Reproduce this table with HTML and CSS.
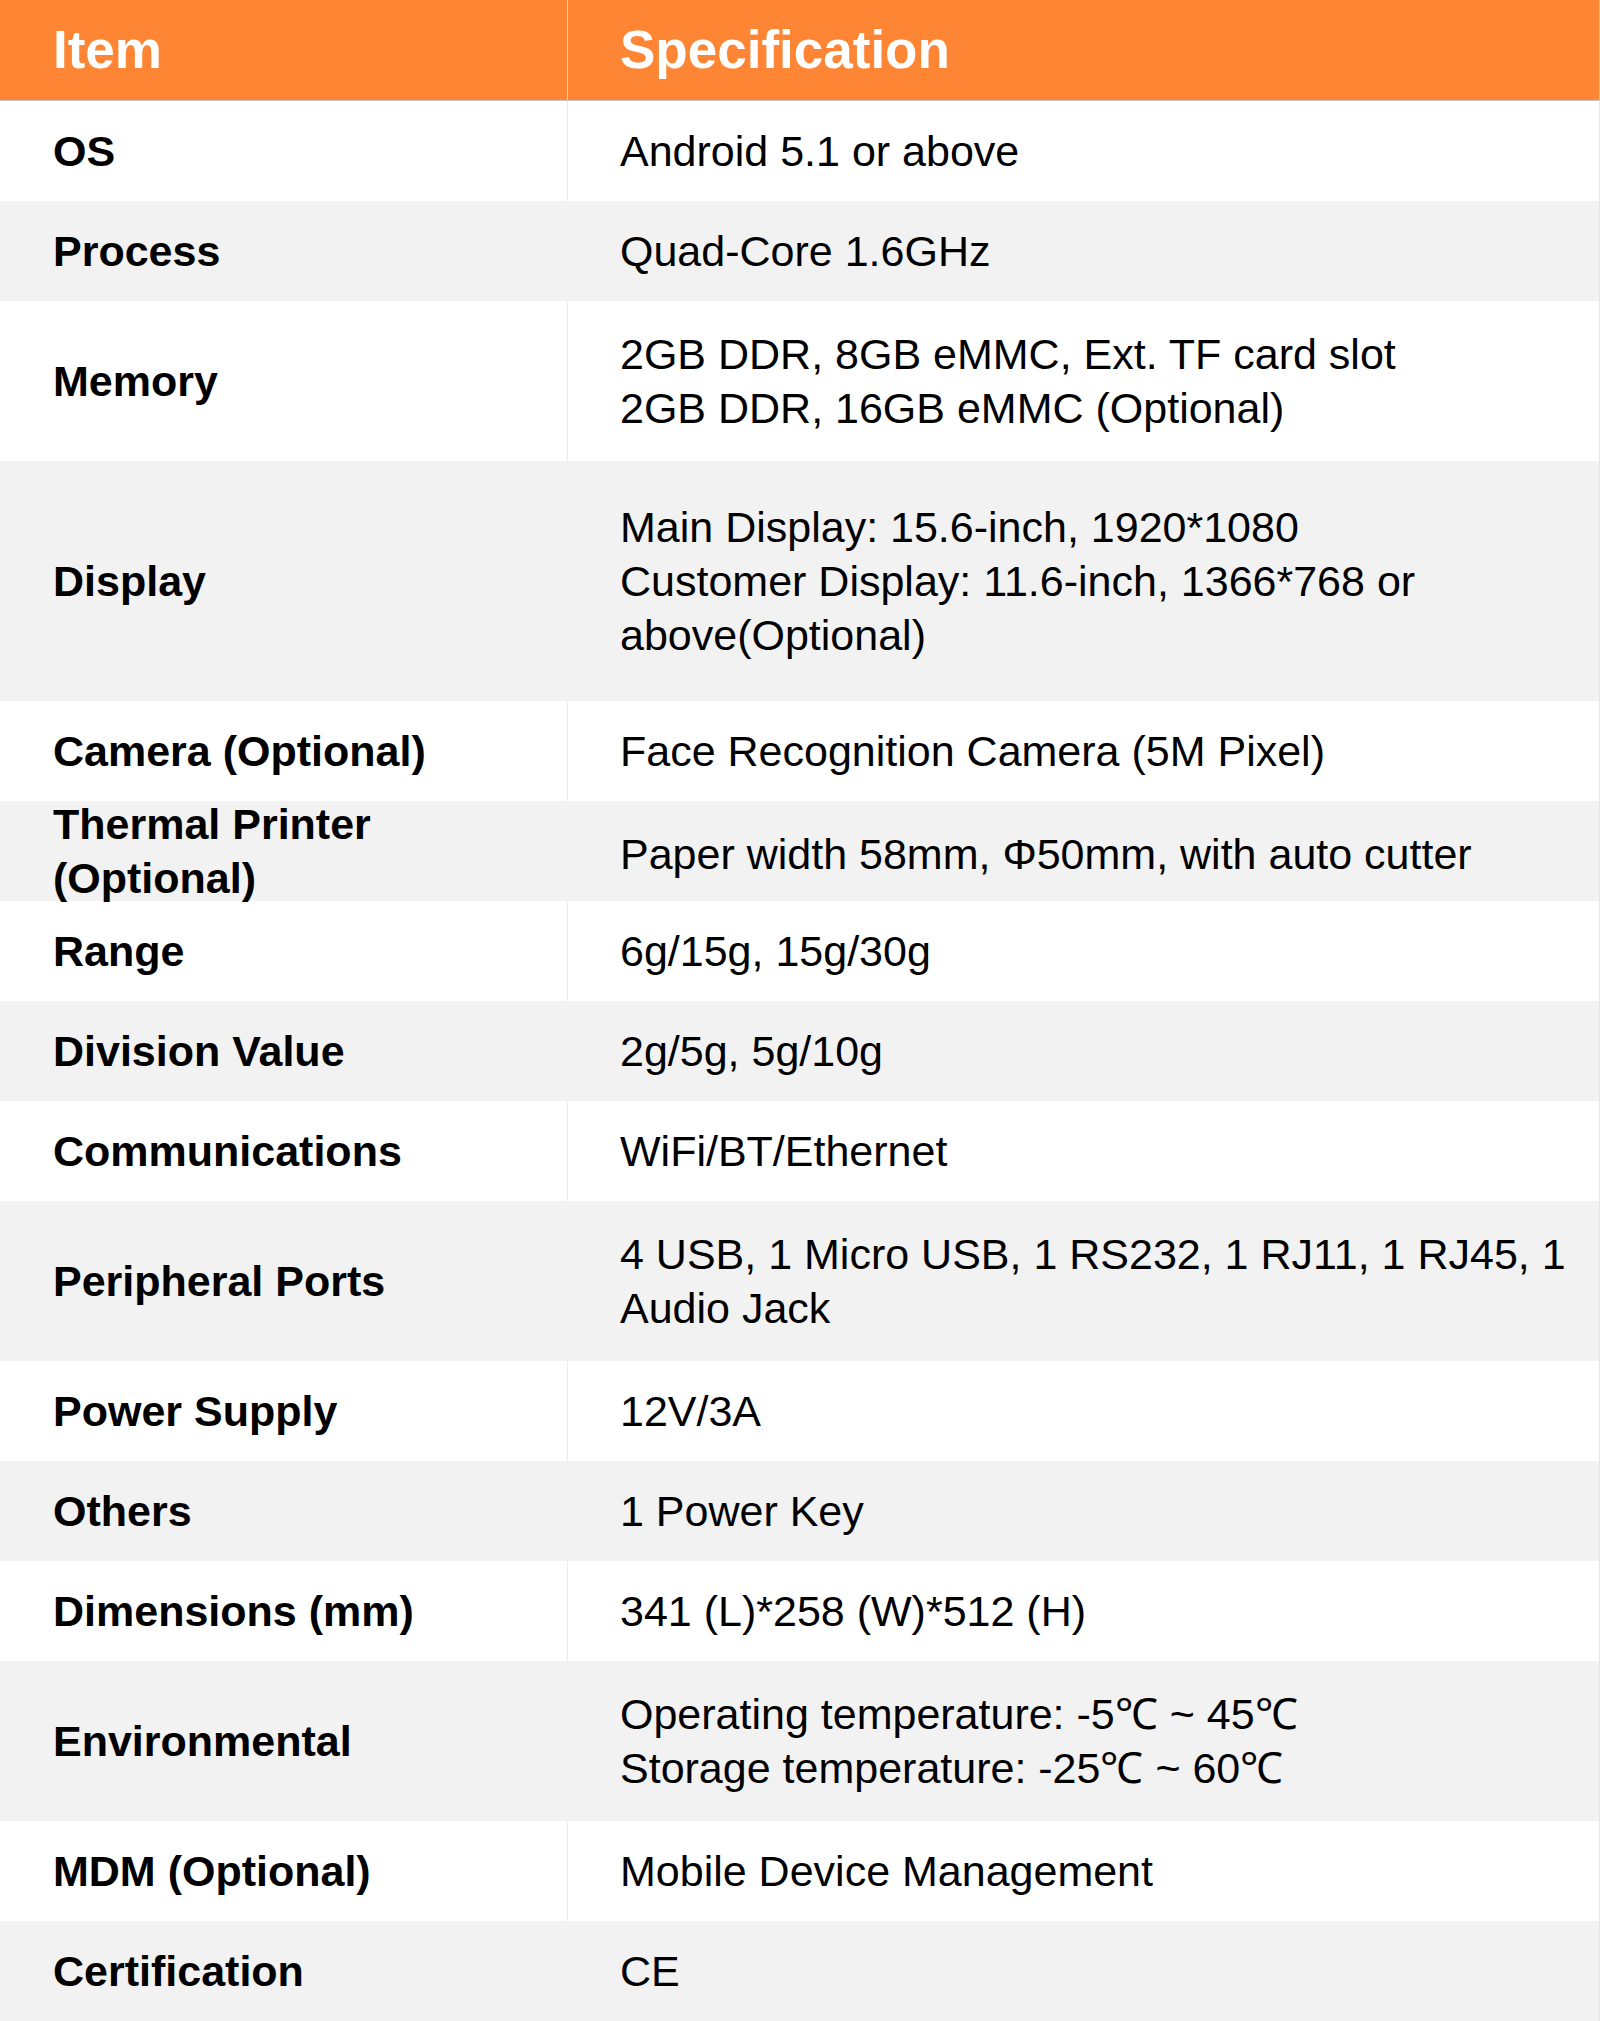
FILE: index.html
```html
<!DOCTYPE html>
<html lang="en">
<head>
<meta charset="utf-8">
<title>Specification</title>
<link rel="stylesheet" href="styles.css">
</head>
<body>
<div class="spec">
  <div class="row head">
    <div class="cell key">Item</div>
    <div class="cell val">Specification</div>
  </div>
  <div class="row"><div class="cell key">OS</div><div class="cell val">Android 5.1 or above</div></div>
  <div class="row alt"><div class="cell key">Process</div><div class="cell val">Quad-Core 1.6GHz</div></div>
  <div class="row tall"><div class="cell key">Memory</div><div class="cell val">2GB DDR, 8GB eMMC, Ext. TF card slot<br>2GB DDR, 16GB eMMC (Optional)</div></div>
  <div class="row alt xtall"><div class="cell key">Display</div><div class="cell val">Main Display: 15.6-inch, 1920*1080<br>Customer Display: 11.6-inch, 1366*768 or above(Optional)</div></div>
  <div class="row"><div class="cell key">Camera (Optional)</div><div class="cell val">Face Recognition Camera (5M Pixel)</div></div>
  <div class="row alt"><div class="cell key">Thermal Printer (Optional)</div><div class="cell val nudge">Paper width 58mm, Φ50mm, with auto cutter</div></div>
  <div class="row"><div class="cell key">Range</div><div class="cell val">6g/15g, 15g/30g</div></div>
  <div class="row alt"><div class="cell key">Division Value</div><div class="cell val">2g/5g, 5g/10g</div></div>
  <div class="row"><div class="cell key">Communications</div><div class="cell val">WiFi/BT/Ethernet</div></div>
  <div class="row alt tall"><div class="cell key">Peripheral Ports</div><div class="cell val">4 USB, 1 Micro USB, 1 RS232, 1 RJ11, 1 RJ45, 1 Audio Jack</div></div>
  <div class="row"><div class="cell key">Power Supply</div><div class="cell val">12V/3A</div></div>
  <div class="row alt"><div class="cell key">Others</div><div class="cell val">1 Power Key</div></div>
  <div class="row"><div class="cell key">Dimensions (mm)</div><div class="cell val">341 (L)*258 (W)*512 (H)</div></div>
  <div class="row alt tall"><div class="cell key">Environmental</div><div class="cell val">Operating temperature: -5℃ ~ 45℃<br>Storage temperature: -25℃ ~ 60℃</div></div>
  <div class="row"><div class="cell key">MDM (Optional)</div><div class="cell val">Mobile Device Management</div></div>
  <div class="row alt"><div class="cell key">Certification</div><div class="cell val">CE</div></div>
</div>
</body>
</html>
```

FILE: styles.css
```css
html, body {
  margin: 0;
  padding: 0;
  background: #ffffff;
}

.spec {
  width: 1600px;
  font-family: "Liberation Sans", Arial, sans-serif;
  font-size: 43px;
  line-height: 54px;
  color: #000000;
}

.row {
  display: grid;
  grid-template-columns: 568px 1fr;
  grid-template-rows: 100%;
  height: 100px;
  background: #ffffff;
  border-right: 1px solid #e6e6e6;
  box-sizing: border-box;
}

.row.alt {
  background: #f2f2f2;
}

.row.tall {
  height: 160px;
}

.row.xtall {
  height: 240px;
}

.cell {
  display: flex;
  align-items: center;
  padding: 0 20px 0 52px;
  box-sizing: border-box;
  min-width: 0;
}

.cell.key {
  font-weight: bold;
  border-right: 1px solid #ececec;
  padding-left: 53px;
  padding-right: 60px;
}

.cell.val.nudge {
  padding-top: 5px;
}

.row.alt .cell.key {
  border-right-color: #f2f2f2;
}

.head {
  height: 101px;
  background: #fe8534;
  border-bottom: 1px solid #c4c4c4;
  border-right: 1px solid #c4c4c4;
}

.head .cell {
  color: #ffffff;
  font-weight: bold;
  font-size: 53px;
}

.head .cell.key {
  border-right: 1px solid #d9d9d9;
}
```
